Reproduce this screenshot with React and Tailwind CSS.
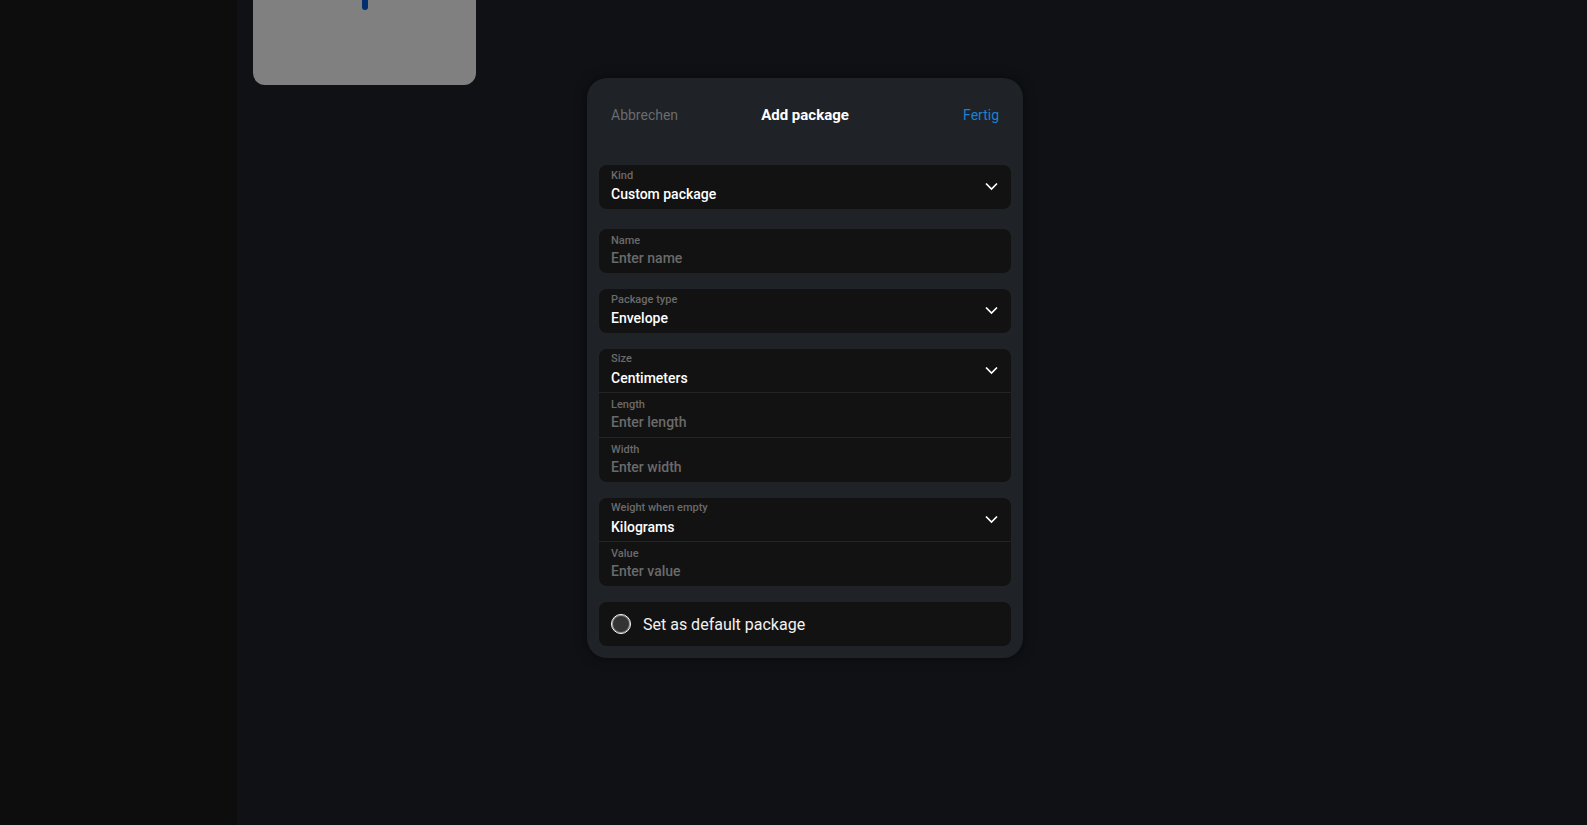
import React, { useState } from "react";

function Chevron() {
  return (
    <svg
      className="pointer-events-none absolute top-4 right-3 h-3 w-4"
      viewBox="0 0 16 12"
      fill="none"
      stroke="#fff"
      strokeWidth="1.7"
      aria-hidden="true"
    >
      <path d="M3 2.5 8.5 8 14 2.5" />
    </svg>
  );
}

function SelectField({ id, label, options, divided }) {
  return (
    <div className={`relative flex h-11 flex-col ${divided ? "border-b border-[#232425]" : ""}`}>
      <label
        htmlFor={id}
        className={`px-3 text-[11px] leading-3 font-medium text-[#6a6a6a] ${divided ? "pt-1" : "pt-[5px]"}`}
      >
        {label}
      </label>
      <select
        id={id}
        className={`w-full flex-1 appearance-none bg-transparent px-3 text-sm leading-5 font-medium text-white outline-none ${divided ? "pb-px" : "pb-[3px]"}`}
      >
        {options.map((option) => (
          <option key={option} className="bg-[#121212]">
            {option}
          </option>
        ))}
      </select>
      <Chevron />
    </div>
  );
}

function InputField({ id, label, placeholder, divided }) {
  return (
    <div className={`flex flex-col ${divided ? "h-[45px] border-b border-[#232425]" : "h-11"}`}>
      <label htmlFor={id} className="px-3 pt-1.5 text-[11px] leading-3 font-medium text-[#6a6a6a]">
        {label}
      </label>
      <input
        id={id}
        type="text"
        placeholder={placeholder}
        className="w-full flex-1 bg-transparent px-3 pb-1 text-sm leading-5 font-medium text-white outline-none placeholder:text-[#6a6a6a]"
      />
    </div>
  );
}

function Group({ children }) {
  return <div className="overflow-hidden rounded-lg bg-[#121212]">{children}</div>;
}

export default function App() {
  const [isDefault, setIsDefault] = useState(false);

  return (
    <div className="grid min-h-screen font-['Roboto',sans-serif]">
      <div className="col-start-1 row-start-1 flex bg-[#101115]">
        <aside className="w-[237px] shrink-0 bg-[#0d0d0d]" />
        <main className="flex-1 px-4">
          <div className="flex h-[85px] w-[223px] items-start justify-center rounded-b-xl bg-[#808080]">
            <div className="h-[10px] w-[6px] rounded-b-full bg-[#032f6e]" />
          </div>
        </main>
      </div>

      <div className="z-10 col-start-1 row-start-1 flex items-start justify-center pt-[78px] pb-6 pl-[23px]">
        <form
          role="dialog"
          aria-labelledby="dialog-title"
          onSubmit={(event) => event.preventDefault()}
          className="w-full max-w-[436px] rounded-[20px] bg-[#1f2226] px-3 pb-3 shadow-[0_0_12px_rgba(0,0,0,0.5)]"
        >
          <header className="grid h-[87px] grid-cols-[1fr_auto_1fr] items-start px-3 pt-[26px]">
            <button type="button" className="justify-self-start text-sm leading-[22px] text-[#6a6b6d]">
              Abbrechen
            </button>
            <h1 id="dialog-title" className="text-[15px] leading-[22px] font-bold text-white">
              Add package
            </h1>
            <button type="submit" className="justify-self-end text-sm leading-[22px] text-[#1782d2]">
              Fertig
            </button>
          </header>

          <div className="mb-5">
            <Group>
              <SelectField id="kind" label="Kind" options={["Custom package"]} />
            </Group>
          </div>

          <div className="flex flex-col gap-4">
            <Group>
              <InputField id="name" label="Name" placeholder="Enter name" />
            </Group>
            <Group>
              <SelectField id="package-type" label="Package type" options={["Envelope"]} />
            </Group>
            <Group>
              <SelectField id="size-unit" label="Size" options={["Centimeters"]} divided />
              <InputField id="length" label="Length" placeholder="Enter length" divided />
              <InputField id="width" label="Width" placeholder="Enter width" />
            </Group>
            <Group>
              <SelectField id="weight-unit" label="Weight when empty" options={["Kilograms"]} divided />
              <InputField id="weight" label="Value" placeholder="Enter value" />
            </Group>
            <Group>
              <label className="flex h-11 items-center gap-3 px-3 text-base leading-6 text-[#f2f2f2]">
                <input
                  type="checkbox"
                  checked={isDefault}
                  onChange={(event) => setIsDefault(event.target.checked)}
                  className="size-5 appearance-none rounded-full border border-white bg-[#333333] shadow-[inset_0_0_0_1px_rgba(255,255,255,0.45)] checked:bg-[#1782d2]"
                />
                <span className="pt-0.5">Set as default package</span>
              </label>
            </Group>
          </div>
        </form>
      </div>
    </div>
  );
}
